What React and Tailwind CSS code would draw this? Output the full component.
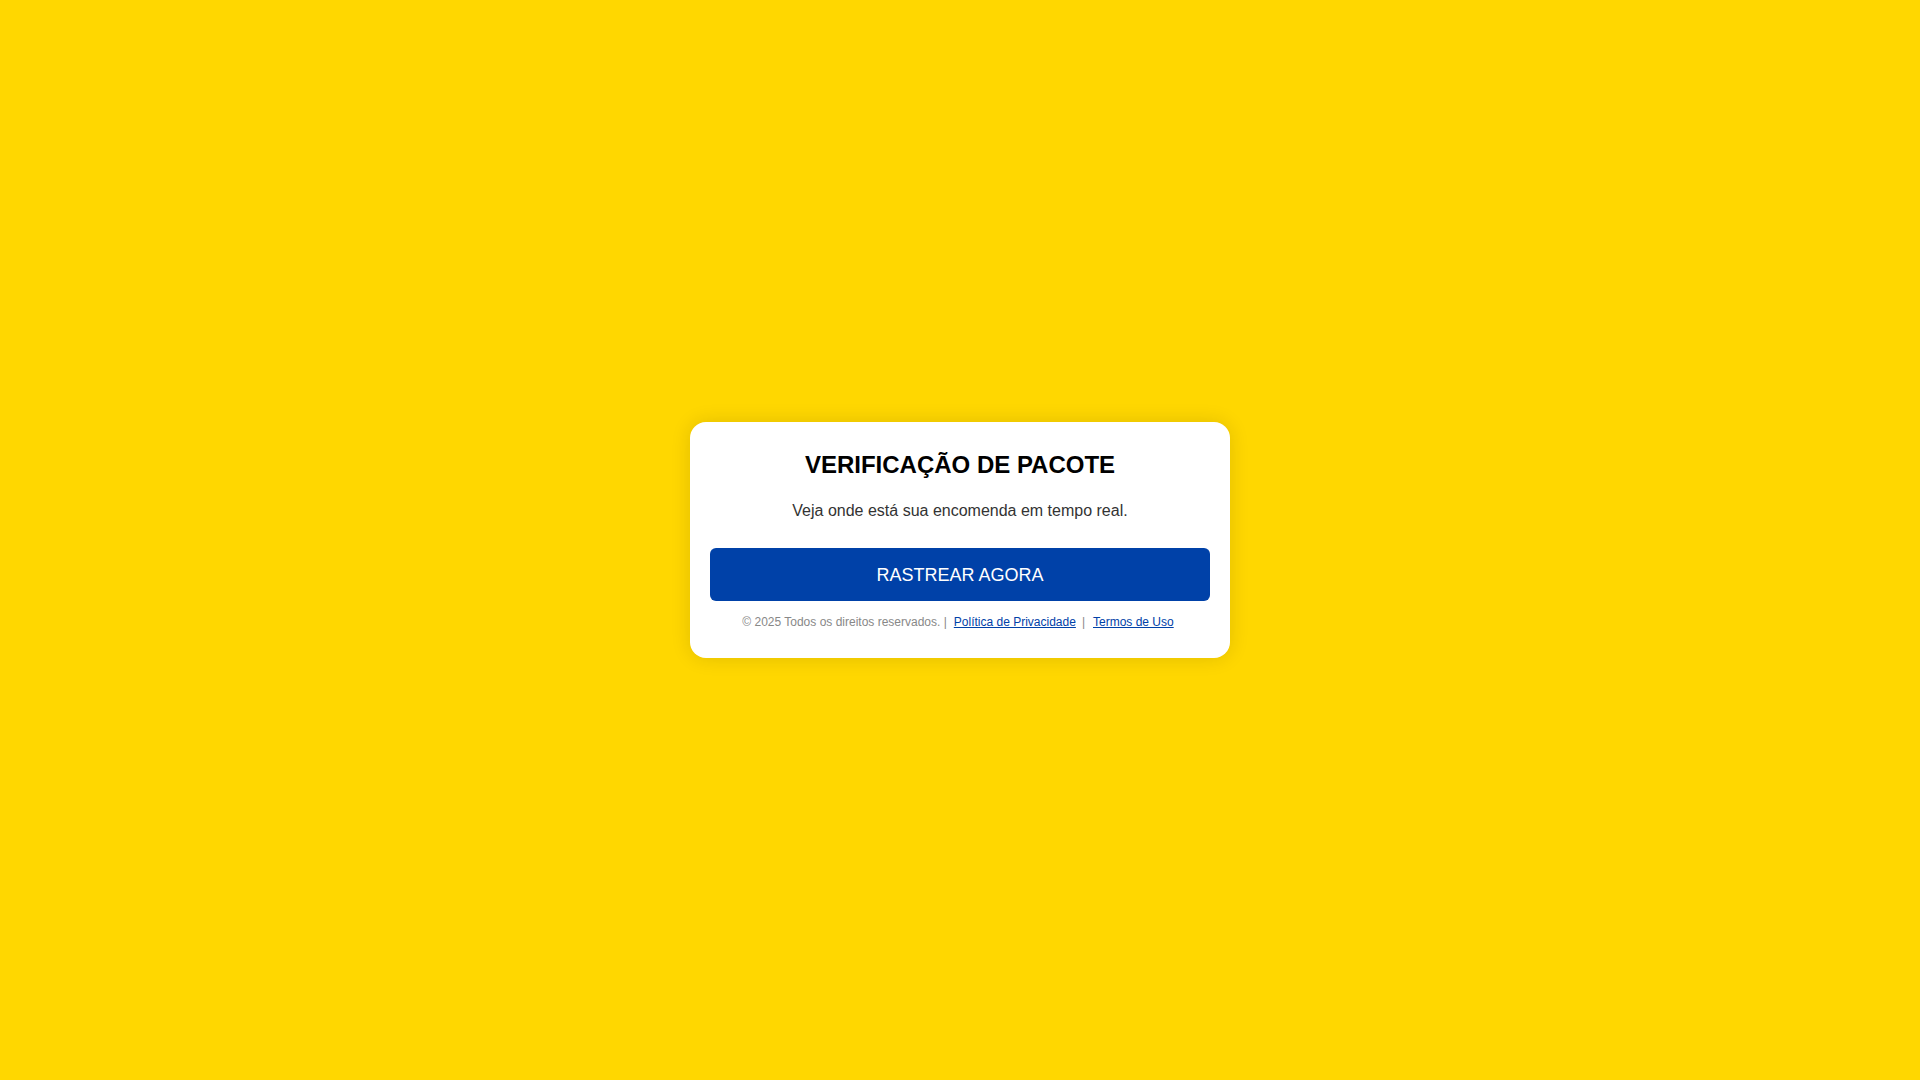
export default function App() {
  return (
    <div
      className="min-h-screen w-full bg-[#ffd700] flex items-center justify-center"
      style={{ fontFamily: '"Liberation Sans", Arial, sans-serif' }}
    >
      {/* ─── Card ─── */}
      <div className="w-[540px] bg-white rounded-2xl shadow-[0_0_20px_rgba(0,0,0,0.12)] px-5 pt-[29px] pb-[29px] text-center">
        <h1 className="text-[24px] leading-[27px] font-bold text-black">
          VERIFICAÇÃO DE PACOTE
        </h1>
        <p className="mt-[24px] text-[16px] leading-[18px] text-[#333]">
          Veja onde está sua encomenda em tempo real.
        </p>
        <button className="mt-[28px] w-full h-[53px] rounded-md bg-[#0041a8] text-white text-[18px] leading-none cursor-pointer">
          RASTREAR AGORA
        </button>
        <p className="mt-[14px] text-[12px] leading-[14px] text-[#888] -translate-x-[2px]">
          © 2025 Todos os direitos reservados. |
          <a href="#" className="ml-[7px] mr-[6px] text-[#0041a8] underline">
            Política de Privacidade
          </a>
          |
          <a href="#" className="ml-[8px] text-[#0041a8] underline">
            Termos de Uso
          </a>
        </p>
      </div>
    </div>
  );
}
